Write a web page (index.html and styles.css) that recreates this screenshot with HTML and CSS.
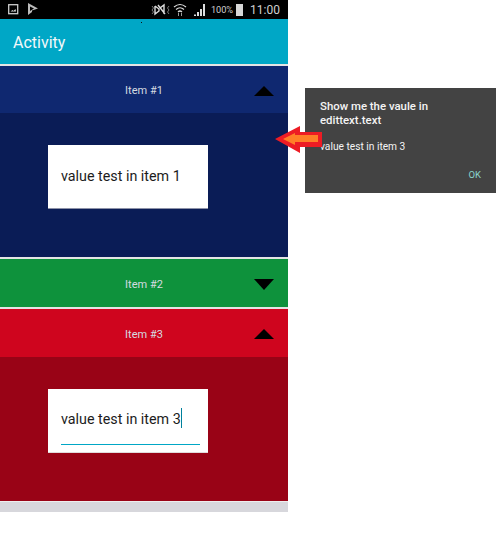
FILE: index.html
```html
<!DOCTYPE html>
<html lang="en">

<head>
    <meta charset="UTF-8">
    <meta name="viewport" content="width=device-width, initial-scale=1.0">
    <title>Activity</title>

    <link rel="stylesheet" href="styles.css">
</head>

<body>
    <div class="page">
        <!-- Phone screen -->
        <div class="phone">
            <div class="status-bar">
                <svg class="status-left" width="30" height="13" viewBox="0 0 30 13">
                    <rect x="0.7" y="1.7" width="9" height="9" fill="none" stroke="#ccc" stroke-width="1.3"/>
                    <path d="M2.5 8.5 L4.5 7 L5.5 8 L7.5 6 L8 8.5 Z" fill="#ddd"/>
                    <path d="M20 0 L30 5.5 L24 7.5 L24 9 L20 12 Z M22 3.5 L22 8 L26 5.5 Z" fill="#bbb" fill-rule="evenodd"/>
                </svg>
                <svg class="status-right" width="55" height="15" viewBox="0 0 55 15">
                    <!-- mute -->
                    <path d="M4 4 L8 7 L8 9 L4 12 L4 4 M7 3 L14 12 M9 6 L13 3 L13 12" fill="none" stroke="#ddd" stroke-width="1.4"/>
                    <path d="M1 4 L2.5 6 L1 8 L2.5 10 L1 12 M18 4 L16.5 6 L18 8 L16.5 10 L18 12" fill="none" stroke="#999" stroke-width="0.8"/>
                    <!-- wifi -->
                    <path d="M23 5 Q29 0 35 5 M25 7.5 Q29 4 33 7.5 M27 10 Q29 8 31 10" fill="none" stroke="#ddd" stroke-width="1.2"/>
                    <path d="M27 11 h1 v3 h-1 z M30 11 h1 v3 h-1 z" fill="#999"/>
                    <!-- signal -->
                    <path d="M43 14 v-1.5 h2 v1.5 z M46 14 v-4 h2 v4 z M49 14 v-7 h2 v7 z M52 14 v-12 h2 v12 z" fill="#ddd"/>
                </svg>
                <span class="battery-text">100%</span>
                <span class="battery"></span>
                <span class="clock">11:00</span>
            </div>
            <div class="action-bar">
                Activity
                <span class="speck"></span>
            </div>

            <div class="item-header blue-header">
                <span>Item #1</span>
                <span class="arrow-up"></span>
            </div>
            <div class="item-body blue-body">
                <div class="edit-box blue-edit">value test in item 1</div>
            </div>

            <div class="item-header green-header">
                <span>Item #2</span>
                <span class="arrow-down"></span>
            </div>

            <div class="item-header red-header">
                <span>Item #3</span>
                <span class="arrow-up"></span>
            </div>
            <div class="item-body red-body">
                <div class="edit-box red-edit">
                    <span class="edit-text">value test in item 3</span><span class="cursor"></span>
                    <div class="edit-line"></div>
                </div>
            </div>
            <div class="footer-strip"></div>
        </div>

        <!-- Dialog shown beside the phone -->
        <div class="side">
            <div class="dialog">
                <div class="dialog-title">Show me the vaule in edittext.text</div>
                <div class="dialog-message">value test in item 3</div>
                <div class="dialog-actions">OK</div>
            </div>
        </div>

        <svg class="pointer" width="47" height="27" viewBox="0 0 47 27">
            <path d="M0 13 L25 0 L25 6 L47 6 L47 21 L25 21 L25 27 Z" fill="#ed1c24"/>
            <path d="M8 13 L20 7 L20 9 L43 9 L43 16 L20 16 L20 19 Z" fill="#ff7f27"/>
        </svg>
    </div>
</body>

</html>
```

FILE: styles.css
```css
* {
    box-sizing: border-box;
}

body {
    margin: 0;
    background: white;
    font-family: Roboto, "Liberation Sans", sans-serif;
}

.page {
    position: relative;
    display: flex;
    width: 498px;
    height: 535px;
}

.phone {
    width: 288px;
    flex-shrink: 0;
}

.status-bar {
    display: flex;
    align-items: center;
    height: 19px;
    padding: 0 8px;
    background: black;
    color: #d0d0d0;
}

.status-left {
    margin-right: auto;
}

.status-right {
    margin-right: 5px;
}

.battery-text {
    font-size: 9.2px;
    margin-right: 3px;
}

.battery {
    width: 7px;
    height: 12px;
    margin-right: 7px;
    background: #d8d8d8;
}

.clock {
    font-size: 12px;
}

.action-bar {
    position: relative;
    display: flex;
    align-items: center;
    height: 45px;
    padding: 2px 0 0 13px;
    background: #00a7c6;
    color: #f2f8fa;
    font-size: 16px;
}

.speck {
    position: absolute;
    left: 141px;
    top: 3px;
    width: 1px;
    height: 1px;
    background: #111;
}

.item-header {
    position: relative;
    display: flex;
    align-items: center;
    justify-content: center;
    height: 49px;
    padding-top: 2px;
    border-top: 2px solid #e4e4e4;
    color: #d5dbe0;
    font-size: 11px;
}

.blue-header {
    background: #0f2870;
}

.green-header {
    height: 50px;
    background: #0e923c;
}

.red-header {
    height: 50px;
    background: #cf051e;
}

.arrow-up,
.arrow-down {
    position: absolute;
    right: 14px;
    width: 0;
    height: 0;
    border-left: 10px solid transparent;
    border-right: 10px solid transparent;
}

.arrow-up {
    border-bottom: 10px solid black;
}

.arrow-down {
    border-top: 11px solid black;
}

.item-body {
    display: flex;
    padding: 32px 0 0 48px;
}

.blue-body {
    height: 144px;
    background: #0a1c56;
}

.red-body {
    height: 144px;
    background: #990316;
}

.edit-box {
    position: relative;
    width: 160px;
    height: 64px;
    padding-left: 13px;
    background: white;
    color: #1c1c1c;
    font-size: 14.3px;
    line-height: 61px;
}

.blue-edit {
    border-bottom: 1px solid #8d92a8;
    line-height: 62px;
}

.red-edit {
    border-bottom: 1px solid #e0dcdc;
}

.cursor {
    position: absolute;
    top: 19px;
    width: 1px;
    height: 20px;
    background: #00809c;
}

.edit-line {
    position: absolute;
    left: 13px;
    bottom: 7px;
    width: 139px;
    height: 1px;
    background: #00a7c6;
}

.footer-strip {
    height: 11px;
    border-top: 1px solid #eee;
    background: #d7d7dc;
}

.side {
    padding: 88px 0 0 17px;
}

.dialog {
    width: 191px;
    height: 105px;
    padding: 11px 15px 0;
    background: #434343;
    color: #f4f4f4;
    font-size: 11.4px;
    line-height: 14px;
}

.dialog-title {
    font-weight: 500;
}

.dialog-message {
    margin-top: 13px;
    font-size: 10.2px;
}

.dialog-actions {
    margin-top: 14px;
    text-align: right;
    color: #8ad4cc;
    font-size: 9.5px;
}

.pointer {
    position: absolute;
    left: 275px;
    top: 126px;
}
```
